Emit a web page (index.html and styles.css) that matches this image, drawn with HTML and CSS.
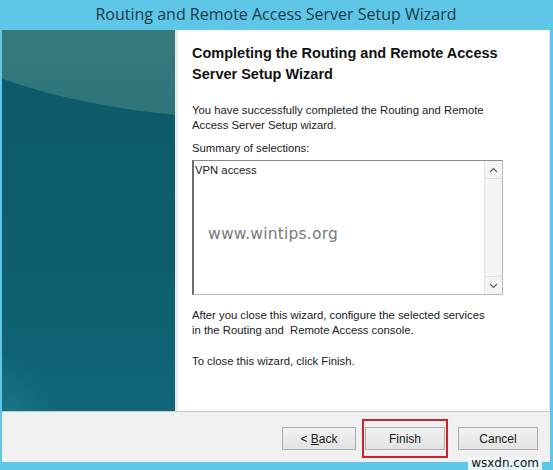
FILE: index.html
```html
<!DOCTYPE html>
<html>
<head>
<meta charset="utf-8">
<link rel="stylesheet" href="styles.css">
</head>
<body>
<div class="window">
  <div class="titlebar">Routing and Remote Access Server Setup Wizard</div>
  <div class="main">
    <div class="sidepanel">
      <div class="sheen"></div>
      <div class="glow"></div>
    </div>
    <div class="divider"></div>
    <div class="content">
      <h1 class="heading">Completing the Routing and Remote Access Server Setup Wizard</h1>
      <p class="text intro">You have successfully completed the Routing and Remote Access Server Setup wizard.</p>
      <p class="text label">Summary of selections:</p>
      <div class="listbox">
        <div class="listtext">VPN access</div>
        <div class="scrollbar">
          <div class="sbtn"><svg width="9" height="6" viewBox="0 0 9 6"><path d="M1 5 L4.5 1.5 L8 5" fill="none" stroke="#606060" stroke-width="1.2"/></svg></div>
          <div class="strack"></div>
          <div class="sbtn"><svg width="9" height="6" viewBox="0 0 9 6"><path d="M1 1 L4.5 4.5 L8 1" fill="none" stroke="#606060" stroke-width="1.2"/></svg></div>
        </div>
        <div class="watermark">www.wintips.org</div>
      </div>
      <p class="text after">After you close this wizard, configure the selected services<br>in the Routing and&nbsp; Remote Access console.</p>
      <p class="text closing">To close this wizard, click Finish.</p>
    </div>
  </div>
  <div class="footer">
    <button class="btn back">&lt; <u>B</u>ack</button>
    <div class="highlight"><button class="btn finish">Finish</button></div>
    <button class="btn cancel">Cancel</button>
    <div class="sitemark">wsxdn.com</div>
  </div>
</div>
</body>
</html>
```

FILE: styles.css
```css
html, body {
  margin: 0;
  padding: 0;
}
body {
  width: 553px;
  height: 470px;
  overflow: hidden;
  background: #5ec6e6;
  font-family: "Liberation Sans", Arial, sans-serif;
}
.window {
  width: 553px;
  height: 470px;
  box-sizing: border-box;
  display: flex;
  flex-direction: column;
  background: #5ec6e6;
  padding: 0 3px 8px 2px;
  position: relative;
}
.titlebar {
  height: 30px;
  flex: none;
  box-sizing: border-box;
  display: flex;
  align-items: center;
  justify-content: center;
  font-family: "Open Sans", "Noto Sans", sans-serif;
  font-size: 16px;
  color: #1d3a49;
  padding-bottom: 3px;
}
.main {
  height: 381px;
  flex: none;
  display: flex;
  background: #ffffff;
}
.sidepanel {
  width: 173px;
  flex: none;
  position: relative;
  overflow: hidden;
  background: linear-gradient(180deg, #0d5a69 0%, #0e5e6d 60%, #11667a 100%);
}
.sheen {
  position: absolute;
  left: -170px;
  top: -312px;
  width: 840px;
  height: 400px;
  border-radius: 50%;
  background: linear-gradient(180deg, #427f82 0%, #377a7e 80%, #2e7479 100%);
}
.glow {
  position: absolute;
  left: -90px;
  bottom: -90px;
  width: 150px;
  height: 150px;
  border-radius: 50%;
  background: radial-gradient(circle, rgba(40,150,160,0.45) 0%, rgba(40,150,160,0) 70%);
}
.divider {
  width: 3px;
  flex: none;
  background: #e6ecee;
}
.content {
  flex: 1;
  padding: 13px 14px 0 14px;
  color: #111;
  border-right: 1px solid #d8e4e8;
}
.heading {
  margin: 0;
  font-family: "Liberation Sans", Arial, sans-serif;
  font-weight: bold;
  font-size: 14.5px;
  line-height: 21px;
  color: #111;
  width: 320px;
}
.text {
  margin: 0;
  font-size: 11.3px;
  line-height: 15px;
  color: #1a1a1a;
}
.intro {
  margin-top: 18px;
  width: 320px;
}
.label {
  margin-top: 8px;
}
.listbox {
  margin-top: 4px;
  width: 311px;
  height: 135px;
  box-sizing: border-box;
  border: 1px solid #b8b8b8;
  border-top-color: #8a8a8a;
  border-left: 2px solid #6c6c6c;
  display: flex;
  position: relative;
  background: #fff;
}
.listtext {
  flex: 1;
  font-size: 11.3px;
  line-height: 15px;
  padding: 2px 1px;
  color: #1a1a1a;
}
.scrollbar {
  width: 17px;
  flex: none;
  display: flex;
  flex-direction: column;
  border-left: 1px solid #e6e6e6;
  background: #f4f4f4;
}
.sbtn {
  height: 17px;
  display: flex;
  align-items: center;
  justify-content: center;
  background: #f4f4f4;
  border-bottom: 1px solid #e0e0e0;
}
.sbtn:last-child {
  border-bottom: none;
  border-top: 1px solid #e0e0e0;
}
.strack {
  flex: 1;
}
.watermark {
  position: absolute;
  left: 14px;
  top: 64px;
  font-family: "DejaVu Sans", sans-serif;
  font-size: 15.5px;
  color: #7a7a7a;
  letter-spacing: 0.2px;
}
.after {
  margin-top: 13px;
  width: 320px;
}
.closing {
  margin-top: 16px;
}
.footer {
  height: 51px;
  flex: none;
  box-sizing: border-box;
  border-top: 1px solid #c9c9c9;
  background: #f0f0f0;
  display: flex;
  align-items: center;
  padding-left: 280px;
  padding-top: 3px;
  position: relative;
}
.btn {
  height: 23px;
  box-sizing: border-box;
  border: 1px solid #acacac;
  background: linear-gradient(180deg, #f2f2f2 0%, #e2e2e2 100%);
  font-family: "Liberation Sans", Arial, sans-serif;
  font-size: 12px;
  color: #1a1a1a;
  padding: 0;
  margin: 0;
}
.back {
  width: 74px;
}
.highlight {
  margin-left: 6px;
  width: 86px;
  height: 39px;
  box-sizing: border-box;
  border: 2px solid #d0202e;
  display: flex;
  align-items: center;
  justify-content: center;
}
.finish {
  width: 80px;
}
.cancel {
  width: 80px;
  margin-left: 10px;
}
.sitemark {
  position: absolute;
  right: 8px;
  bottom: -8px;
  background: rgba(245,250,252,0.9);
  font-family: "DejaVu Sans", sans-serif;
  font-size: 12px;
  line-height: 13px;
  padding: 0 3px;
  color: #111;
}
```
